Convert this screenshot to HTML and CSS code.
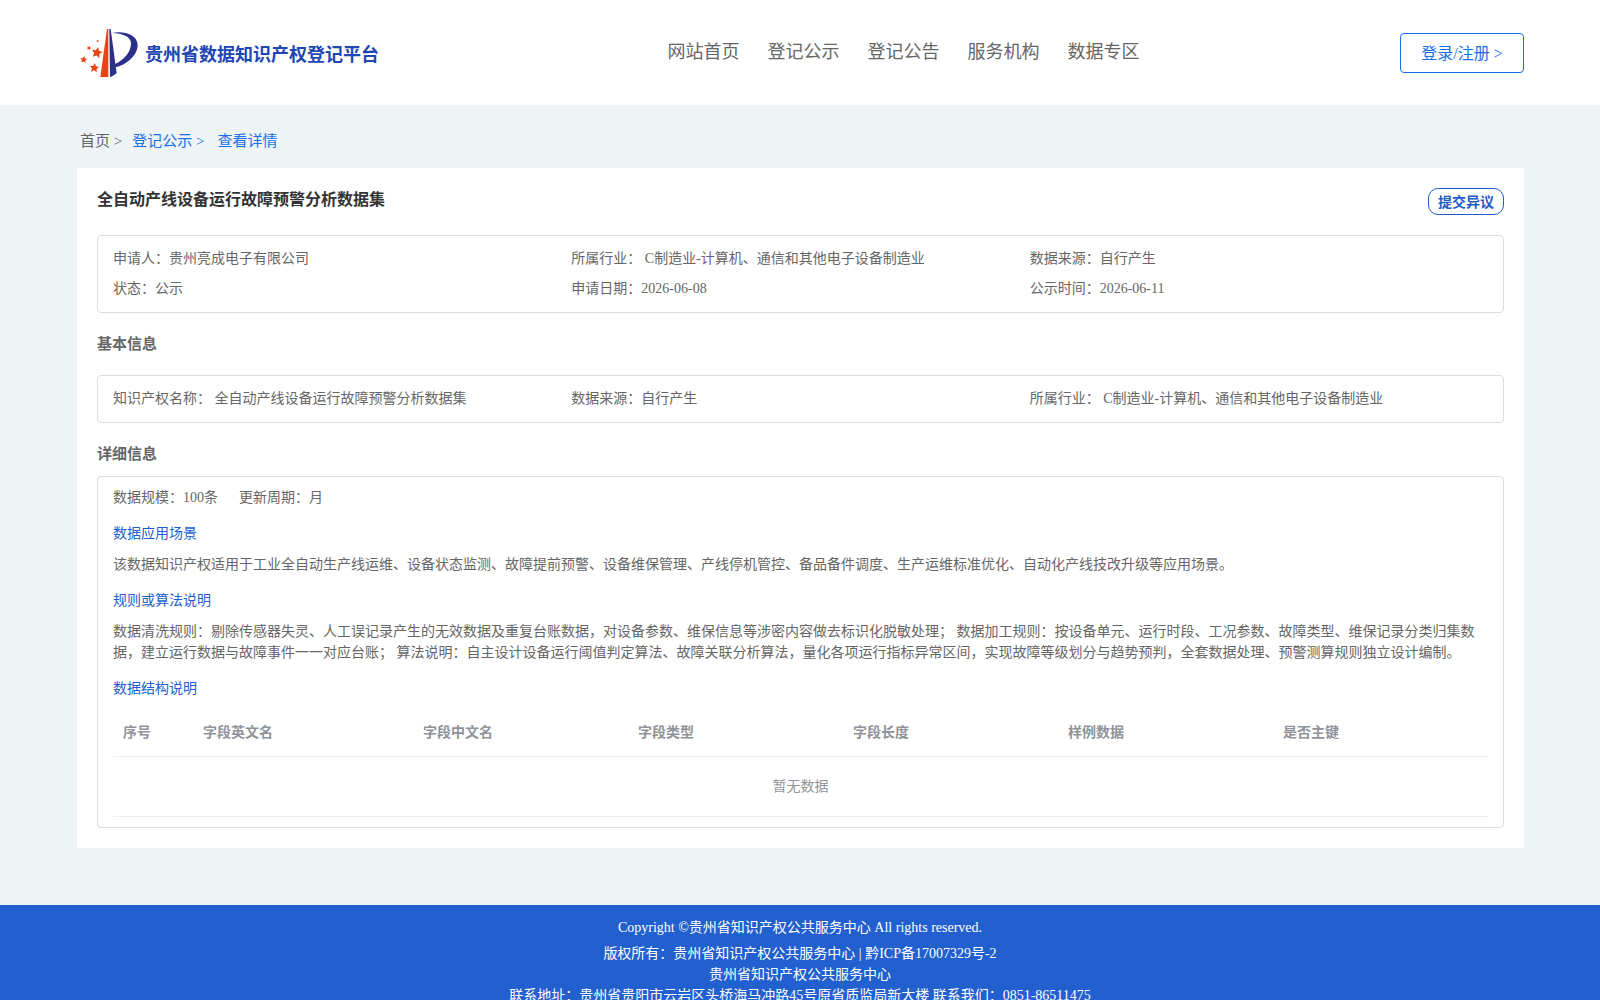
FILE: index.html
```html
<!DOCTYPE html>
<html lang="zh-CN">
<head>
  <meta charset="UTF-8" />
  <meta name="viewport" content="width=device-width, initial-scale=1.0"/>
  <title>贵州省数据知识产权登记平台</title>
  <link rel="stylesheet" href="styles.css">
</head>
<body>

<header class="header">
  <a class="logo" href="#">
    <svg class="logo-icon" viewBox="30 24 174 150" aria-hidden="true">
      <defs>
        <polygon id="star" points="0,-11 3.2,-4 10.5,-3.4 5,1.6 6.5,9 0,5.2 -6.5,9 -5,1.6 -10.5,-3.4 -3.2,-4"/>
      </defs>
      <g fill="#e84516">
        <path d="M111 27H115V171H91Z"/>
        <use href="#star" transform="translate(41 119) rotate(8)"/>
        <use href="#star" transform="translate(57 84) rotate(20) scale(.65)"/>
        <use href="#star" transform="translate(81 98) rotate(12) scale(1.6)"/>
        <use href="#star" transform="translate(83 63) rotate(10) scale(.4)"/>
        <use href="#star" transform="translate(73 144) rotate(6) scale(1.35)"/>
      </g>
      <g fill="#2b3088">
        <path d="M118 27H122L140 160Q130 168 120 171Z"/>
        <path d="M126 39C160 32 203 43 203 76C203 106 168 136 136 142L135 132C160 122 183 98 183 70C183 50 158 40 126 39Z"/>
      </g>
    </svg>
    <span class="logo-text">贵州省数据知识产权登记平台</span>
  </a>
  <nav class="nav">
    <a href="#">网站首页</a>
    <a href="#">登记公示</a>
    <a href="#">登记公告</a>
    <a href="#">服务机构</a>
    <a href="#">数据专区</a>
  </nav>
  <button type="button" class="login-btn">登录/注册 &gt;</button>
</header>

<main class="main">
  <div class="breadcrumb">
    <a href="#" class="home">首页 &gt;</a>
    <a href="#" class="parent">登记公示 &gt;</a>
    <a href="#">查看详情</a>
  </div>

  <div class="card">
    <div class="card-head">
      <h1>全自动产线设备运行故障预警分析数据集</h1>
      <button type="button" class="objection-btn">提交异议</button>
    </div>

    <div class="box info">
      <div>申请人：贵州亮成电子有限公司</div>
      <div>所属行业： C制造业-计算机、通信和其他电子设备制造业</div>
      <div>数据来源：自行产生</div>
      <div>状态：公示</div>
      <div>申请日期：2026-06-08</div>
      <div>公示时间：2026-06-11</div>
    </div>

    <h2 class="basic-title">基本信息</h2>
    <div class="box info">
      <div>知识产权名称： 全自动产线设备运行故障预警分析数据集</div>
      <div>数据来源：自行产生</div>
      <div>所属行业： C制造业-计算机、通信和其他电子设备制造业</div>
    </div>

    <h2 class="detail-title">详细信息</h2>
    <div class="box detail">
      <div class="scale">
        <span>数据规模：100条</span>
        <span>更新周期：月</span>
      </div>

      <h3>数据应用场景</h3>
      <p>该数据知识产权适用于工业全自动生产线运维、设备状态监测、故障提前预警、设备维保管理、产线停机管控、备品备件调度、生产运维标准优化、自动化产线技改升级等应用场景。</p>

      <h3>规则或算法说明</h3>
      <p>数据清洗规则：剔除传感器失灵、人工误记录产生的无效数据及重复台账数据，对设备参数、维保信息等涉密内容做去标识化脱敏处理； 数据加工规则：按设备单元、运行时段、工况参数、故障类型、维保记录分类归集数据，建立运行数据与故障事件一一对应台账； 算法说明：自主设计设备运行阈值判定算法、故障关联分析算法，量化各项运行指标异常区间，实现故障等级划分与趋势预判，全套数据处理、预警测算规则独立设计编制。</p>

      <h3>数据结构说明</h3>
      <table>
        <thead>
          <tr>
            <th class="col-index">序号</th>
            <th class="col-en">字段英文名</th>
            <th>字段中文名</th>
            <th>字段类型</th>
            <th>字段长度</th>
            <th>样例数据</th>
            <th>是否主键</th>
          </tr>
        </thead>
        <tbody>
          <tr>
            <td class="empty" colspan="7">暂无数据</td>
          </tr>
        </tbody>
      </table>
    </div>
  </div>
</main>

<footer class="footer">
  <p class="copyright">Copyright ©贵州省知识产权公共服务中心 All rights reserved.</p>
  <p>版权所有：贵州省知识产权公共服务中心 | 黔ICP备17007329号-2</p>
  <p>贵州省知识产权公共服务中心</p>
  <p>联系地址：贵州省贵阳市云岩区头桥海马冲路45号原省质监局新大楼 联系我们：0851-86511475</p>
</footer>

</body>
</html>
```
FILE: styles.css
```css
* {
  box-sizing: border-box;
}

body {
  margin: 0;
  background-color: #eef3f6;
  color: #666;
  font-family: "Liberation Serif", "Noto Sans CJK SC", serif;
  font-size: 14px;
  line-height: 21px;
}

h1, h2, h3, p {
  margin: 0;
}

a {
  text-decoration: none;
}

button {
  padding: 0 0 2px;
  background-color: #fff;
  font-family: inherit;
  cursor: pointer;
}

.header {
  display: flex;
  justify-content: space-between;
  align-items: center;
  height: 105px;
  padding: 0 76px 0 80px;
  background-color: #fff;
}

.logo {
  display: flex;
  align-items: center;
  gap: 7px;
}

.logo-icon {
  width: 58px;
  height: 50px;
}

.logo-text {
  padding-top: 6px;
  color: #2146b4;
  font-size: 18px;
  font-weight: bold;
}

.nav {
  display: flex;
  gap: 28px;
  margin-left: 28px;
}

.nav a {
  color: #666;
  font-size: 18px;
}

.login-btn {
  width: 124px;
  height: 40px;
  border: 1px solid #1a6feb;
  border-radius: 4px;
  color: #1a6feb;
  font-size: 16px;
}

.main {
  padding: 0 76px 57px 77px;
}

.breadcrumb {
  display: flex;
  padding: 26px 3px 16px;
  font-size: 15px;
}

.breadcrumb a {
  color: #1a6feb;
}

.breadcrumb .home {
  margin-right: 10px;
  color: #666;
}

.breadcrumb .parent {
  margin-right: 13px;
}

.card {
  padding: 20px;
  background-color: #fff;
}

.card-head {
  display: flex;
  justify-content: space-between;
  align-items: flex-start;
  margin-bottom: 20px;
}

h1 {
  color: #333;
  font-size: 16px;
  line-height: 24px;
}

.objection-btn {
  width: 76px;
  height: 27px;
  border: 1px solid #205cc8;
  border-radius: 10px;
  color: #205cc8;
  font-size: 14px;
  font-weight: bold;
}

.box {
  border: 1px solid #dcdcdc;
  border-radius: 4px;
}

.info {
  display: grid;
  grid-template-columns: repeat(3, 1fr);
  padding: 8px 15px;
  line-height: 30px;
}

h2 {
  font-size: 15px;
}

.basic-title {
  padding: 21px 0 20px;
}

.detail-title {
  padding: 21px 0 11px;
}

.detail {
  padding: 10px 15px;
}

.scale {
  display: flex;
  gap: 21px;
}

h3 {
  margin: 15px 0 10px;
  color: #2060d0;
  font-size: 14px;
  font-weight: normal;
}

table {
  width: 100%;
  table-layout: fixed;
  border-collapse: separate;
  border-spacing: 0;
  color: #909399;
}

th, td {
  border-bottom: 1px solid #ebeef5;
}

th {
  height: 48px;
  padding: 0 10px;
  text-align: left;
}

.col-index {
  width: 80px;
}

.col-en {
  width: 16%;
}

.empty {
  height: 60px;
  padding: 0;
  text-align: center;
}

.footer {
  padding: 12px 0;
  background-color: #2260d0;
  color: #fff;
  text-align: center;
}

.copyright {
  margin-bottom: 5px;
}
```
